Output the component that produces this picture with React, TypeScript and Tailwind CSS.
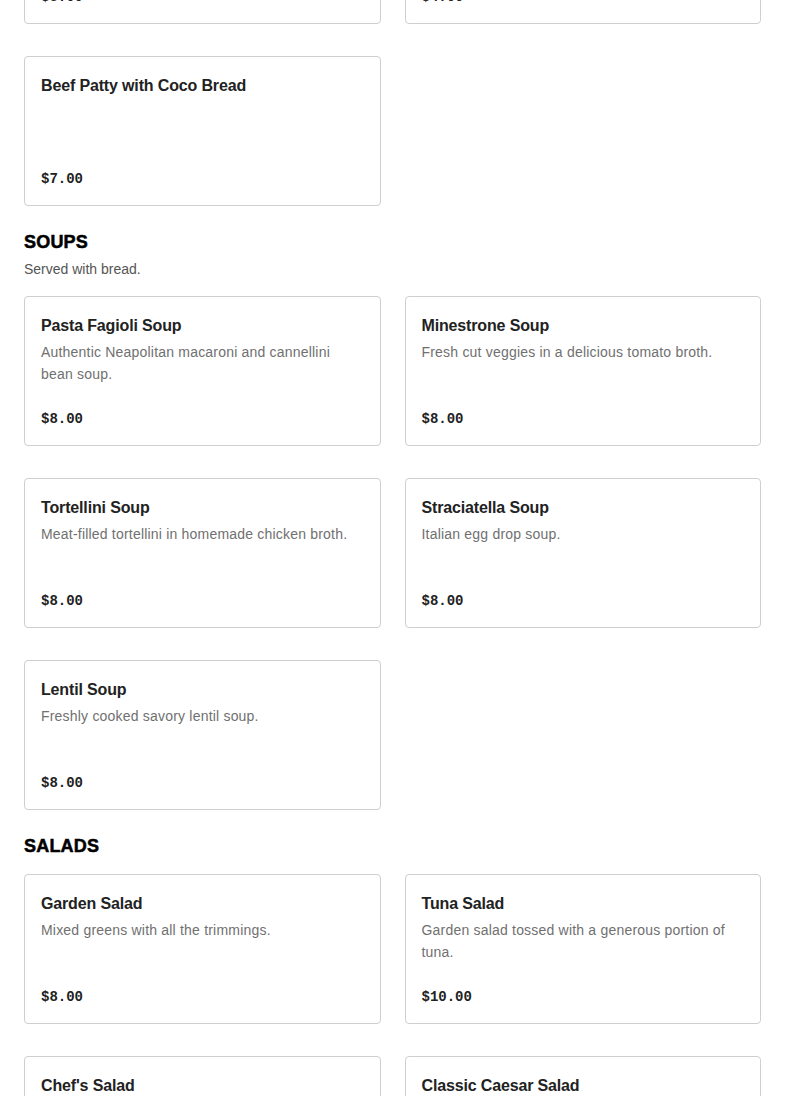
type Item = {
  name: string;
  description?: string;
  price: string;
};

type Section = {
  title?: string;
  note?: string;
  items: Item[];
};

const sections: Section[] = [
  {
    items: [
      { name: 'Jamaican Beef Patty', price: '$5.00' },
      { name: 'Coco Bread', price: '$4.00' },
      { name: 'Beef Patty with Coco Bread', price: '$7.00' },
    ],
  },
  {
    title: 'Soups',
    note: 'Served with bread.',
    items: [
      { name: 'Pasta Fagioli Soup', description: 'Authentic Neapolitan macaroni and cannellini bean soup.', price: '$8.00' },
      { name: 'Minestrone Soup', description: 'Fresh cut veggies in a delicious tomato broth.', price: '$8.00' },
      { name: 'Tortellini Soup', description: 'Meat-filled tortellini in homemade chicken broth.', price: '$8.00' },
      { name: 'Straciatella Soup', description: 'Italian egg drop soup.', price: '$8.00' },
      { name: 'Lentil Soup', description: 'Freshly cooked savory lentil soup.', price: '$8.00' },
    ],
  },
  {
    title: 'Salads',
    items: [
      { name: 'Garden Salad', description: 'Mixed greens with all the trimmings.', price: '$8.00' },
      { name: 'Tuna Salad', description: 'Garden salad tossed with a generous portion of tuna.', price: '$10.00' },
      { name: "Chef's Salad", description: 'Garden salad topped with ham, turkey and cheese.', price: '$11.00' },
      { name: 'Classic Caesar Salad', description: 'Romaine, croutons and parmesan with Caesar dressing.', price: '$9.00' },
    ],
  },
];

function MenuCard({ name, description, price }: Item) {
  return (
    <div className="flex h-[150px] flex-col rounded border border-[#cfcfcf] bg-white px-4 pt-[17px] pb-4">
      <h3 className="text-[16px] font-bold leading-6 tracking-[-0.15px] text-[#222]">{name}</h3>
      {description && (
        <p className="mt-[3px] text-[14px] leading-[22px] tracking-[0.2px] text-[#707070]">{description}</p>
      )}
      <p className="mt-auto font-['Liberation_Mono',monospace] text-[14px] font-bold leading-5 text-[#222]">
        {price}
      </p>
    </div>
  );
}

export default function App() {
  return (
    <div className="min-h-screen bg-white px-6 font-['Liberation_Sans',Arial,sans-serif]">
      <div className="-mt-[126px]">
        {sections.map((s, i) => (
          <section key={i} className={i > 0 ? 'mt-[22px]' : ''}>
            {s.title && (
              <div className="mb-[14px]">
                <h2 className="text-[18px] font-bold uppercase leading-7 tracking-[0.2px] text-black [-webkit-text-stroke:0.5px_black]">
                  {s.title}
                </h2>
                {s.note && (
                  <p className="mt-[2px] pb-[2px] text-[14px] leading-[22px] text-[#555]">{s.note}</p>
                )}
              </div>
            )}
            <div className="grid grid-cols-2 gap-x-6 gap-y-8">
              {s.items.map((it) => (
                <MenuCard key={it.name} {...it} />
              ))}
            </div>
          </section>
        ))}
      </div>
    </div>
  );
}
